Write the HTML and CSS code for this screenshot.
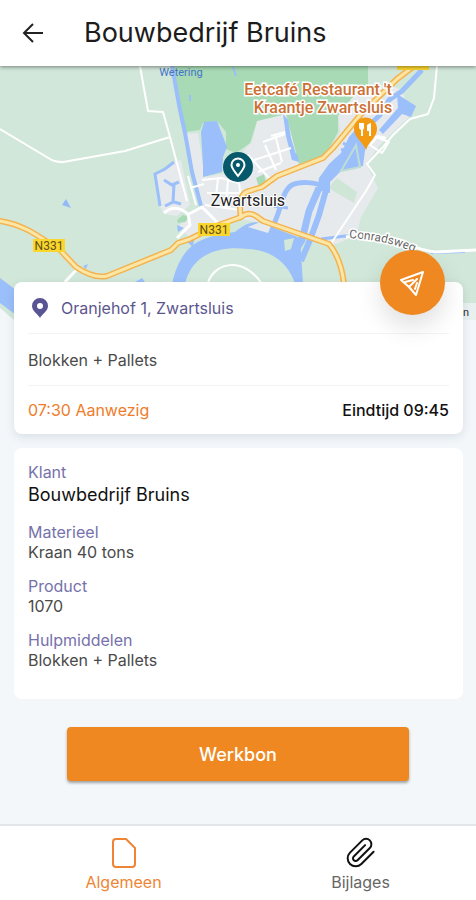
FILE: index.html
```html
<!DOCTYPE html>
<html lang="nl">
<head>
    <meta charset="UTF-8">
    <meta name="viewport" content="width=device-width, initial-scale=1.0">
    <title>Bouwbedrijf Bruins</title>
    <link rel="stylesheet" href="styles.css">
</head>
<body>
    <header class="topbar">
        <button class="back-btn" type="button" aria-label="Terug">
            <svg width="22" height="22" viewBox="0 0 22 22" fill="none" stroke="#222" stroke-width="2">
                <path d="M21 11H2.500M11 2L2 11l9 9"/>
            </svg>
        </button>
        <h1>Bouwbedrijf Bruins</h1>
    </header>

    <main>
        <svg class="map" viewBox="0 66 476 254" preserveAspectRatio="xMidYMid slice">
            <rect x="0" y="66" width="476" height="254" fill="#d1e7d9"/>

            <!-- built-up area -->
            <g fill="#e7eaed">
                <path d="M155 175L174 162L181 160L190 205L177 216L164 214L157 200Z"/>
                <path d="M186 134L198 133L205 177L223 174L240 154L252 142L257 121L286 114L299 165L325 157L340 132L338 110L352 92L385 84L403 90L408 118L392 133L378 147L366 164L378 188L361 217L357 233L344 241L330 246L262 223L240 219L196 240L190 238L178 226L200 207Z"/>
            </g>

            <!-- parks -->
            <g fill="#a8dab5">
                <path d="M172 66H368V84L352 98L338 116L338 132L325 156L299 164L286 114L257 121L250 143L236 153L226 149L226 132L217 121L203 123L200 130L185 132Z"/>
                <path d="M177 220L183 215L190 217L185 222L178 223Z"/>
                <path d="M256 178L264 174L267 186L260 190Z"/>
                <path d="M328 188L337 178L357 192L354 203Z" fill="#cfe6d7"/>
            </g>
            <path d="M66 199L71 208L62 205Z" fill="#94b9fb"/>

            <!-- water -->
            <g fill="#9bbffa">
                <path d="M201 132L204 122L217 121L222 134L227 147L223 157L222 172L203 177L203 166Z"/>
                <path d="M283 114L288 120L291 138L297 158L292 160L286 136Z"/>
                <path d="M290 150L297 154L299 162L292 160Z"/>
                <path d="M397 94L416 106L411 117L402 114L383 134L379 130L398 108Z"/>
                <path d="M361 126L366 143L363 166L341 171L330 182L330 193L317 190L319 178L329 164L341 153L349 137L355 130Z"/>
                <path d="M172 284C177 261 187 246 202 240C211 236 220 234 235 232C247 222 257 219 269 226L300 238L303 284H295C290 267 275 250 248 249C215 245 191 257 185 284Z"/>
                <path d="M0 278L20 293V318L0 303Z"/>
                <path d="M177 225L184 228L178 232ZM187 242L194 240L193 247ZM135 282L142 278L145 282ZM83 266L88 264L86 269Z"/>
            </g>
            <g fill="none" stroke="#9bbffa">
                <path stroke-width="4" d="M172 66L180 110L185 133L192 172L201 206"/>
                <path stroke-width="3" d="M174 162L165 169L155 174L160 206M164 180L172 185L179 182M174 184L173 202L165 206M174 202L181 204"/>
                <path stroke-width="5" d="M326 187C315 182 300 181 292 185C281 191 282 212 270 232"/>
                <path stroke-width="7" d="M319 188L309 211L302 240L292 255"/>
                <path stroke-width="6" d="M326 190L319 215L310 240L301 261"/>
                <path stroke-width="5" d="M422 70L402 91L389 100L380 115L366 128"/>
                <path stroke-width="3" d="M343 143L352 148L341 150M274 206L288 208M321 239L345 236L360 237"/>
                <path stroke-width="2" d="M190 95L190 101M233 67L236 76M431 253L465 252"/>
            </g>
            <path d="M284 240L294 238L291 249L285 251Z" fill="#d1e7d9"/>
            <path d="M341 171L356 145L360 167Z" fill="none" stroke="#bfddd2" stroke-width="2"/>
            <path d="M263 221L271 226L268 233L258 230L248 227Z" fill="#e7eaed"/>

            <!-- local roads -->
            <g fill="none" stroke="#fff" stroke-linejoin="round">
                <path stroke-width="2" d="M0 129L50 159Q58 164 69 161L125 151L170 137M140 66L148 111L163 112L170 137L187 201"/>
                <path stroke-width="2" d="M437 66L434 98L428 114L410 119L393 135L383 147L367 164L375 175L366 191M374 136L389 142L382 153L370 145L378 136L386 138M366 191L330 245"/>
                <path stroke-width="3" d="M164 213Q175 203 188 214L190 225L177 238M189 214L202 207L220 225M78 268L65 282"/>
                <path stroke-width="2" d="M202 180L221 178L239 183L241 197M207 193L240 193M218 179L215 204M228 180L226 207M205 205L240 210M188 176L196 205M190 188L204 184M254 160L291 148M258 172L281 163M265 145L276 170M263 142L285 134M275 134L282 162M271 136L285 132M248 155L270 179"/>
                <path stroke-width="2" d="M208 283C214 262 244 256 262 284"/>
                <path stroke-width="3" d="M346 237C385 232 402 247 435 252L476 250"/>
            </g>

            <!-- N331 -->
            <g fill="none" stroke-linejoin="round" stroke-linecap="round">
                <g stroke="#f4b34f" stroke-width="6">
                    <path d="M0 221C30 226 45 242 60 250L76 267Q94 279 107 276L171 250L178 243L190 239L216 226L241 217"/>
                    <path d="M241 217Q248 211 256 216L263 221L329 244Q341 258 344 284M241 217Q237 194 249 191L262 187L277 176L323 158L333 148L361 114L397 79L414 66"/>
                </g>
                <g stroke="#fce6a5" stroke-width="3">
                    <path d="M0 221C30 226 45 242 60 250L76 267Q94 279 107 276L171 250L178 243L190 239L216 226L241 217"/>
                    <path d="M241 217Q248 211 256 216L263 221L329 244Q341 258 344 284M241 217Q237 194 249 191L262 187L277 176L323 158L333 148L361 114L397 79L414 66"/>
                </g>
            </g>

            <rect x="33" y="239" width="32" height="13" fill="#fbd62e"/>
            <rect x="198" y="223" width="32" height="13" fill="#fbd62e"/>
            <rect x="397" y="60" width="32" height="10" fill="#fbd62e"/>
            <g class="road-label">
                <text x="49" y="250">N331</text>
                <text x="214" y="234">N331</text>
            </g>
            <text class="water-label" x="181" y="76">Wetering</text>
            <g class="place-label">
                <text x="318" y="95">Eetcafé Restaurant 't</text>
                <text x="323" y="113">Kraantje Zwartsluis</text>
            </g>
            <text class="town-label" x="248" y="206">Zwartsluis</text>
            <path id="conradsweg" d="M349 238Q385 240 414 252" fill="none"/>
            <text class="street-label"><textPath href="#conradsweg">Conradsweg</textPath></text>

            <!-- restaurant marker -->
            <path d="M354 129A11.500 11.500 0 1 1 377 129C377 137 369 141 366 150C362 141 354 137 354 129Z" fill="#f39a13"/>
            <path d="M359 123H364V127Q364 130 362 130Q359 130 359 127ZM361 129H363V136H361ZM371 123V136H369V131H367V126Q367 124 371 123Z" fill="#fff"/>

            <!-- job location -->
            <circle cx="238" cy="167" r="15" fill="#05596a"/>
            <path d="M238 176C234 171 231.500 168 231.500 165A6.500 6.500 0 0 1 244.500 165C244.500 168 242 171 238 176Z" fill="none" stroke="#fff" stroke-width="2"/>
            <circle cx="238" cy="165" r="2" fill="#fff"/>

            <path d="M0 308L14 320H0Z" fill="#f3f7fa"/>
            <rect x="455" y="303" width="21" height="17" fill="#e9f1f0"/>
            <text class="map-credit" x="463" y="316">n</text>
        </svg>

        <section class="card summary">
            <a class="navigate-btn" href="#route" aria-label="Route">
                <svg width="28" height="28" viewBox="0 0 28 28" fill="none" stroke="#fff" stroke-width="2" stroke-linejoin="round" stroke-linecap="round">
                    <path d="M24 3L2 11L10 18L17 26ZM10 18L18 10M6 13L14 11M16 20L18 14"/>
                </svg>
            </a>
            <div class="row address">
                <svg width="16" height="20" viewBox="0 0 16 20">
                    <path fill="#595493" fill-rule="evenodd" d="M8 0A8 8 0 0 0 0 8C0 13 6 16 8 20C10 16 16 13 16 8A8 8 0 0 0 8 0ZM8 5A3 3 0 1 1 8 11A3 3 0 0 1 8 5Z"/>
                </svg>
                <span>Oranjehof 1, Zwartsluis</span>
            </div>
            <div class="row">Blokken + Pallets</div>
            <div class="row times">
                <span class="present">07:30 Aanwezig</span>
                <span class="end-time">Eindtijd 09:45</span>
            </div>
        </section>

        <dl class="card details">
            <div>
                <dt>Klant</dt>
                <dd class="customer">Bouwbedrijf Bruins</dd>
            </div>
            <div>
                <dt>Materieel</dt>
                <dd>Kraan 40 tons</dd>
            </div>
            <div>
                <dt>Product</dt>
                <dd>1070</dd>
            </div>
            <div>
                <dt>Hulpmiddelen</dt>
                <dd>Blokken + Pallets</dd>
            </div>
        </dl>

        <div class="action">
            <button class="btn" type="button">Werkbon</button>
        </div>
    </main>

    <nav class="tabs">
        <a class="tab active" href="#algemeen">
            <svg width="32" height="32" viewBox="0 0 32 32" fill="none" stroke="currentColor" stroke-width="2" stroke-linejoin="round">
                <path d="M8 2H18L27 11V27Q27 30 24 30H8Q5 30 5 27V5Q5 2 8 2Z"/>
            </svg>
            <span>Algemeen</span>
        </a>
        <a class="tab" href="#bijlages">
            <svg width="32" height="32" viewBox="0 0 24 24" fill="none" stroke="#111" stroke-width="1.500" stroke-linecap="round" stroke-linejoin="round">
                <path d="M21.440 11.050l-9.190 9.190a6 6 0 0 1-8.490-8.490l9.190-9.190a4 4 0 0 1 5.660 5.660l-9.200 9.190a2 2 0 0 1-2.830-2.830l8.490-8.480"/>
            </svg>
            <span>Bijlages</span>
        </a>
    </nav>
</body>
</html>
```
FILE: styles.css
```css
* {
    box-sizing: border-box;
}
body {
    font-family: Inter, "Open Sans", sans-serif;
    font-size: 16px;
    line-height: 20px;
    margin: 0;
    min-height: 100vh;
    display: flex;
    flex-direction: column;
    background-color: #f3f7fa;
    color: #4a4a4a;
}
a {
    text-decoration: none;
}
.topbar {
    position: relative;
    z-index: 1;
    display: flex;
    align-items: center;
    gap: 30px;
    height: 66px;
    padding: 0 12px;
    background-color: #fff;
    box-shadow: 0 1px 4px rgba(0, 0, 0, 0.45);
}
.topbar h1 {
    margin: 0;
    color: #1c1c1c;
    font-size: 27px;
    font-weight: 400;
    line-height: 32px;
}
.back-btn {
    display: flex;
    padding: 10px;
    border: none;
    background: none;
    cursor: pointer;
}
.map {
    display: block;
    width: 100%;
    height: 254px;
}
.map text {
    font-family: Roboto, sans-serif;
    text-anchor: middle;
    paint-order: stroke;
}
.road-label {
    font-size: 12px;
    fill: #5f5016;
}
.map .water-label {
    font-size: 11px;
    fill: #4674c8;
}
.place-label {
    font-size: 16px;
    font-weight: 500;
    fill: #cc7136;
    stroke: #fff;
    stroke-width: 3px;
}
.map .town-label {
    font-size: 16px;
    fill: #222;
    stroke: #fff;
    stroke-width: 2px;
}
.map .street-label {
    font-size: 12px;
    fill: #666;
    stroke: #fff;
    stroke-width: 3px;
    text-anchor: start;
}
.map .map-credit {
    font-size: 11px;
    fill: #333;
    text-anchor: start;
}
.card {
    margin: 14px 13px 0 14px;
    padding: 0 14px;
    border-radius: 8px;
    background-color: #fff;
}
.summary {
    position: relative;
    margin-top: -38px;
    box-shadow: 0 3px 10px rgba(40, 60, 80, 0.12);
}
.row {
    display: flex;
    align-items: center;
    height: 52px;
    border-bottom: 1px solid #f3f3f5;
}
.row:last-child {
    height: 48px;
    border-bottom: none;
}
.address {
    gap: 13px;
    padding-left: 4px;
    color: #5c568f;
}
.times {
    justify-content: space-between;
}
.present {
    color: #ee7c2b;
}
.end-time {
    color: #111;
    font-weight: 500;
}
.navigate-btn {
    position: absolute;
    top: -32px;
    right: 18px;
    display: flex;
    align-items: center;
    justify-content: center;
    width: 65px;
    height: 65px;
    border-radius: 50%;
    background-color: #f08822;
    box-shadow: 0 12px 24px rgba(0, 0, 0, 0.12);
}
.details {
    padding: 14px 14px 15px;
}
.details div {
    margin-bottom: 14px;
}
.details dt {
    color: #7672ab;
}
.details dd {
    margin: 0;
}
.details .customer {
    color: #111;
    font-size: 18px;
    line-height: 26px;
}
.action {
    padding: 28px 67px;
}
.btn {
    display: block;
    width: 100%;
    height: 54px;
    border: none;
    border-radius: 4px;
    background-color: #f08822;
    box-shadow: 0 2px 3px rgba(0, 0, 0, 0.35);
    color: #fff;
    font-family: inherit;
    font-size: 18px;
    font-weight: 500;
    cursor: pointer;
}
.tabs {
    display: flex;
    gap: 6px;
    margin-top: auto;
    padding: 11px 0 8px 8px;
    border-top: 2px solid #e3e6e9;
    background-color: #fff;
}
.tab {
    flex: 1;
    display: flex;
    flex-direction: column;
    align-items: center;
    gap: 3px;
    color: #666;
}
.tab.active {
    color: #ee8534;
}
```
